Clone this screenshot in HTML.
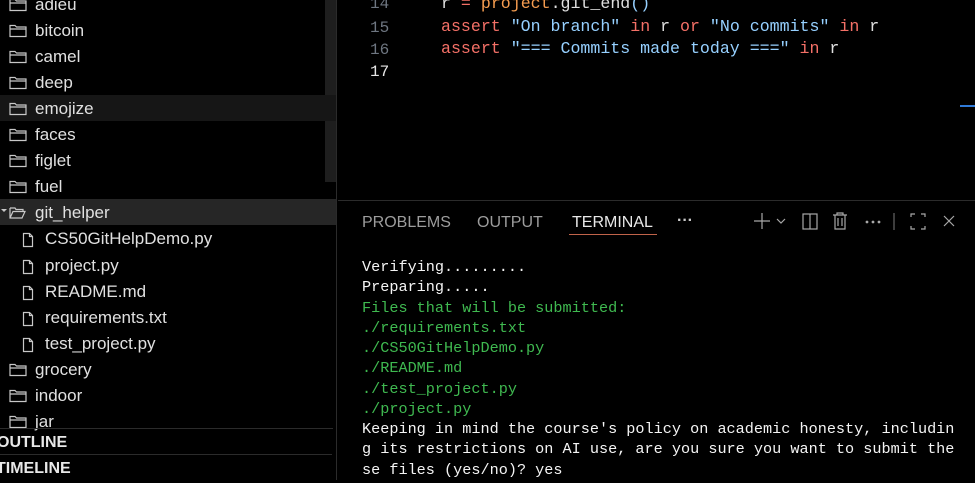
<!DOCTYPE html>
<html><head><meta charset="utf-8"><style>
*{margin:0;padding:0;box-sizing:border-box}
body{width:975px;height:480px;background:#000;overflow:hidden;position:relative;font-family:"Liberation Sans","DejaVu Sans",sans-serif;color:#ccc}
.side{position:absolute;left:0;top:0;width:337px;height:480px;background:#000;border-right:1px solid #2b2b2b}
.row{position:absolute;left:0;width:336px;height:26px;font-size:17px;color:#e0e0e0;line-height:26px}
.row svg{position:absolute;top:6px}
.row span{position:absolute}
.sb{position:absolute;left:325px;top:0;width:11px;height:182px;background:#1e1e1e}
.hdr{position:absolute;left:0;width:336px;height:26px;font-weight:bold;font-size:16px;color:#e8e8e8;line-height:26px;border-top:1px solid #2b2b2b}
.mono{font-family:"Liberation Mono","DejaVu Sans Mono",monospace}
.ln{position:absolute;left:370px;font-size:16px;color:#6e7681}
.code{position:absolute;left:441px;font-size:16.6px;white-space:pre;color:#e0e0e0}
.k{color:#f47067}.s{color:#96d0ff}.f{color:#f69d50}
.term{position:absolute;left:362px;top:257px;font-size:15.2px;line-height:20.25px;white-space:pre;color:#f4f4f4}
.g{color:#3fb950}
.tab{position:absolute;top:214px;font-size:16px;color:#9d9d9d;letter-spacing:0}
</style></head><body>
<div class="side">
<div class="sb"></div>
<div style="position:absolute;left:0;top:95px;width:336px;height:26px;background:#161616"></div>
<div style="position:absolute;left:0;top:199px;width:336px;height:26px;background:#262626"></div>
</div>
<div id="rows"></div>
<script>
var items=[["adieu",-9,0],["bitcoin",17,0],["camel",43,0],["deep",69,0],["emojize",95,0],["faces",121,0],["figlet",147,0],["fuel",173,0],["git_helper",199,2],["CS50GitHelpDemo.py",225,1],["project.py",252,1],["README.md",278,1],["requirements.txt",304,1],["test_project.py",330,1],["grocery",356,0],["indoor",382,0],["jar",408,0]];
var h="";
items.forEach(function(it){
 var n=it[0],y=it[1]+1,t=it[2];
 var icon;
 if(t==1) icon='<svg style="left:21px" width="14" height="16" viewBox="0 0 14 16"><path d="M2.5 1.5h6l3 3v10h-9z M8.5 1.5v3h3" fill="none" stroke="#c8c8c8" stroke-width="1.2"/></svg>';
 else if(t==2) icon='<svg style="left:0px" width="30" height="14" viewBox="0 0 30 14"><path d="M1 3l3 3 3-3z" fill="#c8c8c8"/><path d="M10 2h5l1 1.5h7v2 M10 2v10h12l3-6.5H13l-3 6.5" fill="none" stroke="#c8c8c8" stroke-width="1.2"/></svg>';
 else icon='<svg style="left:9px" width="18" height="14" viewBox="0 0 18 14"><path d="M1 1.5h5l1.5 1.5h9.5v9.5H1z M1 5h16" fill="none" stroke="#c8c8c8" stroke-width="1.2"/></svg>';
 var x=t==1?45:35;
 h+='<div class="row" style="top:'+y+'px">'+icon+'<span style="left:'+x+'px">'+n+'</span></div>';
});
document.getElementById("rows").innerHTML=h;
</script>
<div class="hdr" style="top:428px;left:-3px;line-height:28px">OUTLINE</div>
<div class="hdr" style="top:454px;left:-4px;line-height:28px">TIMELINE</div>

<div class="ln mono" style="top:-5px">14</div>
<div class="ln mono" style="top:19px">15</div>
<div class="ln mono" style="top:41px">16</div>
<div class="ln mono" style="top:63px;color:#e6e6e6">17</div>
<div class="code mono" style="top:-6px">r <span class="k">=</span> <span class="f">project</span>.git_end<span class="s">()</span></div>
<div class="code mono" style="top:17px"><span class="k">assert</span> <span class="s">"On branch"</span> <span class="k">in</span> r <span class="k">or</span> <span class="s">"No commits"</span> <span class="k">in</span> r</div>
<div class="code mono" style="top:39px"><span class="k">assert</span> <span class="s">"=== Commits made today ==="</span> <span class="k">in</span> r</div>
<div style="position:absolute;left:960px;top:105px;width:15px;height:2px;background:#2f7ad8"></div>

<div style="position:absolute;left:338px;top:200px;width:637px;height:1px;background:#2b2b2b"></div>
<div class="tab" style="left:362px">PROBLEMS</div>
<div class="tab" style="left:477px">OUTPUT</div>
<div class="tab" style="left:572px;color:#e8e8e8">TERMINAL</div>
<div style="position:absolute;left:569px;top:234px;width:88px;height:1px;background:#c0634a"></div>
<div class="tab" style="left:677px;top:212px;color:#ccc;font-weight:bold">···</div>
<svg style="position:absolute;left:740px;top:205px" width="235" height="35" viewBox="0 0 235 35" fill="none" stroke="#a8a8a8" stroke-width="1.2">
<path d="M22 8v16M14 16h16"/><path d="M37 14l4 4 4-4"/>
<rect x="63" y="9" width="14" height="15"/><path d="M70 9v15"/>
<path d="M93 10h14M97 10v-2h6v2M95 10v14h10V10M98 13v8M102 13v8"/>
<circle cx="127" cy="17" r=".8" fill="#a8a8a8"/><circle cx="133" cy="17" r=".8" fill="#a8a8a8"/><circle cx="139" cy="17" r=".8" fill="#a8a8a8"/>
<path d="M154 8v17" stroke="#666"/>
<path d="M171 12v-3h4M181 9h4v3M185 21v3h-4M175 24h-4v-3"/>
<path d="M204 11l10 10M214 11l-10 10"/>
</svg>

<div class="term mono">Verifying.........
Preparing.....
<span class="g">Files that will be submitted:
./requirements.txt
./CS50GitHelpDemo.py
./README.md
./test_project.py
./project.py</span>
Keeping in mind the course's policy on academic honesty, includin
g its restrictions on AI use, are you sure you want to submit the
se files (yes/no)? yes</div>
</body></html>
